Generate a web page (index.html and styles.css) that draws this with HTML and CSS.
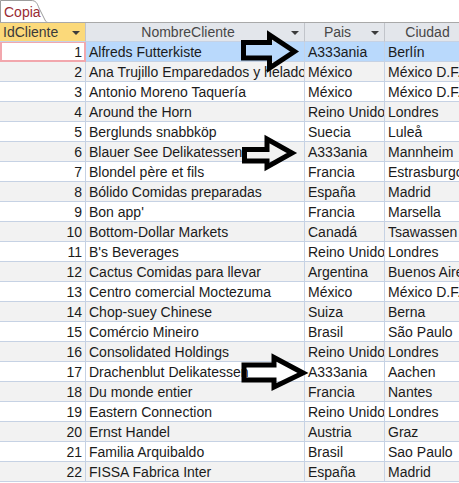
FILE: index.html
```html
<!DOCTYPE html>
<html>
<head>
<meta charset="utf-8">
<link rel="stylesheet" href="styles.css">
</head>
<body>
<div class="page">
  <div class="tabbar">
    <div class="tab">
      <svg class="tab-outline" width="48" height="23" viewBox="0 0 48 23"><path d="M0.5,23 V0.5 H31 C36,0.5 37,3 39,8 L44,18 C45.5,21 46,22.5 48,22.5" fill="#fff" stroke="#9c9c9c" stroke-width="1"/></svg>
      <span class="tab-label">Copia</span>
    </div>
  </div>
  <div class="sheet">
    <div class="row head">
      <div class="cell c1 hsel">IdCliente<span class="dd"></span></div>
      <div class="cell c2 hc">NombreCliente<span class="dd"></span></div>
      <div class="cell c3 hc">Pais<span class="dd"></span></div>
      <div class="cell c4 hc">Ciudad</div>
    </div>
    <div class="row sel"><div class="cell c1 num cur">1</div><div class="cell c2">Alfreds Futterkiste</div><div class="cell c3">A333ania</div><div class="cell c4">Berlín</div></div>
    <div class="row alt"><div class="cell c1 num">2</div><div class="cell c2">Ana Trujillo Emparedados y helados</div><div class="cell c3">México</div><div class="cell c4">México D.F.</div></div>
    <div class="row"><div class="cell c1 num">3</div><div class="cell c2">Antonio Moreno Taquería</div><div class="cell c3">México</div><div class="cell c4">México D.F.</div></div>
    <div class="row alt"><div class="cell c1 num">4</div><div class="cell c2">Around the Horn</div><div class="cell c3">Reino Unido</div><div class="cell c4">Londres</div></div>
    <div class="row"><div class="cell c1 num">5</div><div class="cell c2">Berglunds snabbköp</div><div class="cell c3">Suecia</div><div class="cell c4">Luleå</div></div>
    <div class="row alt"><div class="cell c1 num">6</div><div class="cell c2">Blauer See Delikatessen</div><div class="cell c3">A333ania</div><div class="cell c4">Mannheim</div></div>
    <div class="row"><div class="cell c1 num">7</div><div class="cell c2">Blondel père et fils</div><div class="cell c3">Francia</div><div class="cell c4">Estrasburgo</div></div>
    <div class="row alt"><div class="cell c1 num">8</div><div class="cell c2">Bólido Comidas preparadas</div><div class="cell c3">España</div><div class="cell c4">Madrid</div></div>
    <div class="row"><div class="cell c1 num">9</div><div class="cell c2">Bon app'</div><div class="cell c3">Francia</div><div class="cell c4">Marsella</div></div>
    <div class="row alt"><div class="cell c1 num">10</div><div class="cell c2">Bottom-Dollar Markets</div><div class="cell c3">Canadá</div><div class="cell c4">Tsawassen</div></div>
    <div class="row"><div class="cell c1 num">11</div><div class="cell c2">B's Beverages</div><div class="cell c3">Reino Unido</div><div class="cell c4">Londres</div></div>
    <div class="row alt"><div class="cell c1 num">12</div><div class="cell c2">Cactus Comidas para llevar</div><div class="cell c3">Argentina</div><div class="cell c4">Buenos Aires</div></div>
    <div class="row"><div class="cell c1 num">13</div><div class="cell c2">Centro comercial Moctezuma</div><div class="cell c3">México</div><div class="cell c4">México D.F.</div></div>
    <div class="row alt"><div class="cell c1 num">14</div><div class="cell c2">Chop-suey Chinese</div><div class="cell c3">Suiza</div><div class="cell c4">Berna</div></div>
    <div class="row"><div class="cell c1 num">15</div><div class="cell c2">Comércio Mineiro</div><div class="cell c3">Brasil</div><div class="cell c4">São Paulo</div></div>
    <div class="row alt"><div class="cell c1 num">16</div><div class="cell c2">Consolidated Holdings</div><div class="cell c3">Reino Unido</div><div class="cell c4">Londres</div></div>
    <div class="row"><div class="cell c1 num">17</div><div class="cell c2">Drachenblut Delikatessen</div><div class="cell c3">A333ania</div><div class="cell c4">Aachen</div></div>
    <div class="row alt"><div class="cell c1 num">18</div><div class="cell c2">Du monde entier</div><div class="cell c3">Francia</div><div class="cell c4">Nantes</div></div>
    <div class="row"><div class="cell c1 num">19</div><div class="cell c2">Eastern Connection</div><div class="cell c3">Reino Unido</div><div class="cell c4">Londres</div></div>
    <div class="row alt"><div class="cell c1 num">20</div><div class="cell c2">Ernst Handel</div><div class="cell c3">Austria</div><div class="cell c4">Graz</div></div>
    <div class="row"><div class="cell c1 num">21</div><div class="cell c2">Familia Arquibaldo</div><div class="cell c3">Brasil</div><div class="cell c4">Sao Paulo</div></div>
    <div class="row alt"><div class="cell c1 num">22</div><div class="cell c2">FISSA Fabrica Inter</div><div class="cell c3">España</div><div class="cell c4">Madrid</div></div>
  </div>
  <svg class="arrows" width="459" height="483" viewBox="0 0 459 483">
    <polygon points="243.5,42.5 269.5,42.5 269.5,35 294.5,51.5 269.5,68 269.5,58 243.5,58" />
    <polygon points="244.5,149.5 267,149.5 267,139 292,153 267,167 267,161 244.5,161" />
    <polygon points="244,365 274,365 274,357.5 303,373 274,387 274,380 244,380" />
  </svg>
</div>
</body>
</html>
```

FILE: styles.css
```css
html, body {
  margin: 0;
  padding: 0;
  background: #ffffff;
}
body {
  font-family: "Liberation Sans", Arial, sans-serif;
  font-size: 14px;
  color: #1b1b1b;
  overflow: hidden;
}
.page {
  position: relative;
  width: 459px;
  height: 483px;
  overflow: hidden;
}
.tabbar {
  height: 22px;
  position: relative;
}
.tab {
  position: relative;
  width: 48px;
  height: 22px;
}
.tab-outline {
  position: absolute;
  left: 0;
  top: 0;
}
.tab-label {
  position: relative;
  display: block;
  padding: 4px 0 0 4px;
  font-size: 14px;
  line-height: 16px;
  color: #9a2b32;
}
.sheet {
  border-top: 1px solid #a9a9a9;
  position: relative;
}
.row {
  display: grid;
  grid-template-columns: 86px 219px 80px 100px;
  height: 20px;
}
.cell {
  box-sizing: border-box;
  height: 20px;
  border-right: 1px solid #c6d2e4;
  border-bottom: 1px solid #c6d2e4;
  padding: 0 3px;
  line-height: 20px;
  white-space: nowrap;
  overflow: hidden;
  text-overflow: clip;
  position: relative;
}
.head .cell {
  background: #e3e6eb;
  color: #474747;
  border-right: 1px solid #c1c4ca;
  border-bottom: 1px solid #c6d2e4;
  height: 19px;
  line-height: 19px;
}
.head {
  height: 19px;
}
.head .hsel {
  background: #fbd97a;
  color: #3a3a3a;
}
.head .hc {
  text-align: center;
  padding-right: 17px;
}
.dd {
  position: absolute;
  right: 5px;
  top: 8px;
  width: 0;
  height: 0;
  border-left: 4px solid transparent;
  border-right: 4px solid transparent;
  border-top: 4px solid #3c3c3c;
}
.num {
  text-align: right;
}
.alt .cell {
  background: #f2f2f2;
}
.sel .cell {
  background: #b9d9fc;
}
.sel .cur {
  background: #ffffff;
  border: 2px solid #f2a7ad;
  border-top-width: 1px;
  line-height: 18px;
  padding-right: 2px;
}
.arrows {
  position: absolute;
  left: 0;
  top: 0;
  pointer-events: none;
}
.arrows polygon {
  fill: none;
  stroke: #000;
  stroke-width: 5;
  stroke-linejoin: miter;
}
```
